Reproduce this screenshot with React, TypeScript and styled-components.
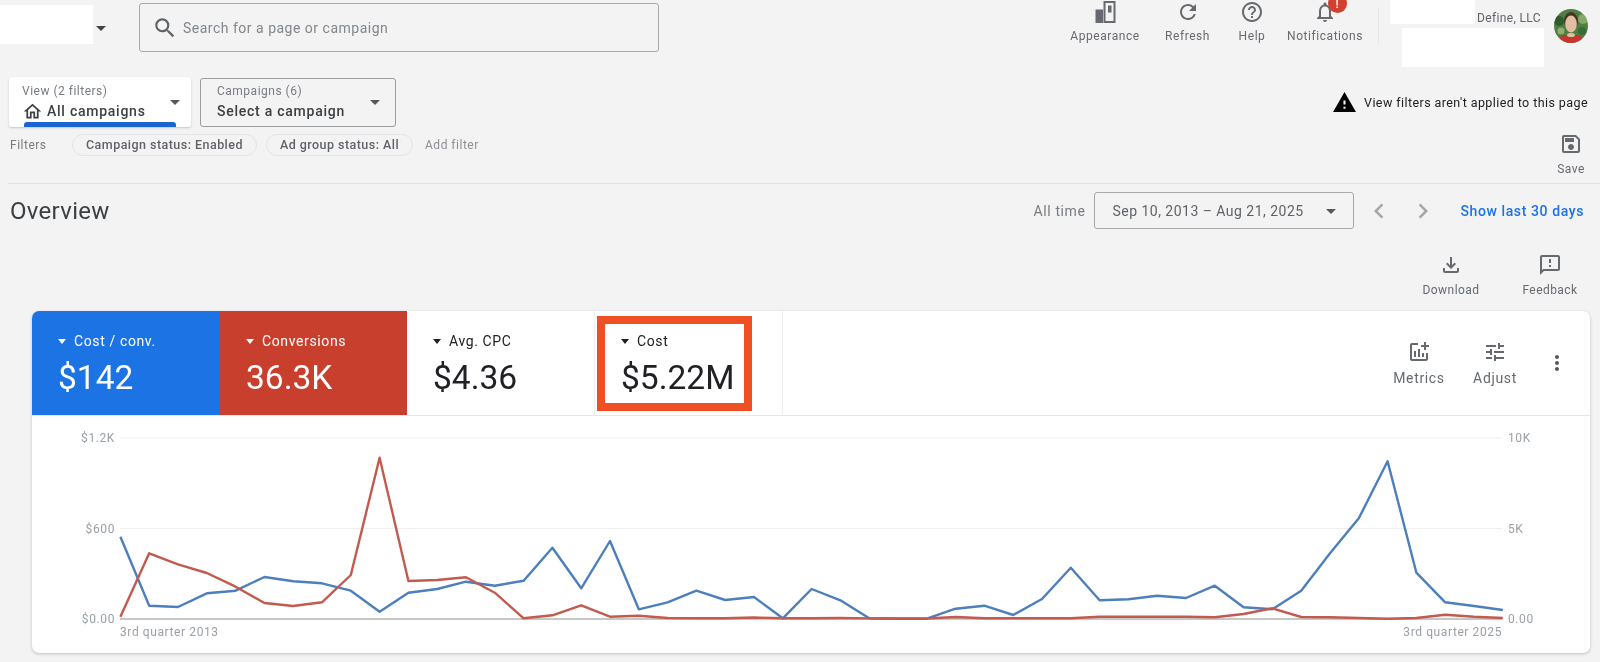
import React from 'react';
import styled, { createGlobalStyle } from 'styled-components';
import {
  MdArrowDropDown,
  MdChevronLeft,
  MdChevronRight,
  MdHelpOutline,
  MdMoreVert,
  MdOutlineAddchart,
  MdOutlineFeedback,
  MdOutlineFileDownload,
  MdOutlineHome,
  MdOutlineNotifications,
  MdOutlineSave,
  MdRefresh,
  MdSearch,
  MdTune,
  MdWarning,
} from 'react-icons/md';

const GlobalStyle = createGlobalStyle`
  html, body {
    margin: 0;
    padding: 0;
    background: #f3f3f4;
  }
  * {
    box-sizing: border-box;
  }
`;

const Page = styled.div`
  width: 1600px;
  height: 662px;
  overflow: hidden;
  background: #f3f3f4;
  color: #5f6368;
  font-family: Roboto, "Liberation Sans", sans-serif;
  filter: blur(0.35px);
`;

/* top bar */
const Header = styled.header`
  display: flex;
  height: 77px;
  padding-right: 12px;
`;

const LogoMask = styled.div`
  width: 93px;
  height: 39px;
  margin-top: 5px;
  background: #fff;
`;

const LogoCaret = styled.div`
  display: flex;
  width: 46px;
  height: 56px;
  margin-left: -4px;
  margin-right: 4px;
  align-items: center;
  color: #444;
  font-size: 24px;
`;

const SearchBox = styled.div`
  display: flex;
  width: 520px;
  height: 49px;
  margin-top: 3px;
  padding-left: 12px;
  align-items: center;
  gap: 5px;
  border: 1px solid #a6a8aa;
  border-radius: 3px;
  color: #80868b;
  font-size: 14px;
  letter-spacing: 0.5px;
  svg {
    color: #5f6368;
  }
`;

const NavList = styled.nav`
  display: flex;
  margin-left: auto;
`;

const NavItem = styled.div<{ $w: number }>`
  position: relative;
  display: flex;
  flex-direction: column;
  width: ${p => p.$w}px;
  align-items: center;
  color: #666a6e;
  font-size: 12px;
  letter-spacing: 0.55px;
  svg {
    display: block;
  }
  span {
    margin-top: 4px;
    line-height: 16px;
    white-space: nowrap;
  }
`;

const Badge = styled.i`
  position: absolute;
  top: -6px;
  left: 53px;
  width: 19px;
  height: 19px;
  padding-top: 6px;
  border-radius: 50%;
  background: #d2402e;
  color: #fff;
  font: 700 10px/10px Roboto, sans-serif;
  text-align: center;
`;

const NavDivider = styled.div`
  width: 1px;
  height: 36px;
  margin: 8px 11px 0 3px;
  background: #e3e4e6;
`;

const Account = styled.div`
  display: flex;
  width: 198px;
`;

const AccountText = styled.div`
  display: flex;
  flex-direction: column;
  width: 154px;
`;

const AccountTop = styled.div`
  display: flex;
  height: 24px;
`;

const MaskTop = styled.div`
  width: 85px;
  height: 24px;
  background: #fff;
`;

const AccountName = styled.div`
  margin: 11px 0 0 2px;
  color: #5f6368;
  font-size: 12px;
  line-height: 14px;
  letter-spacing: 0.35px;
  white-space: nowrap;
`;

const MaskBottom = styled.div`
  width: 142px;
  height: 39px;
  margin: 4px 0 0 12px;
  background: #fff;
`;

const Avatar = styled.svg`
  width: 34px;
  height: 34px;
  margin: 9px 0 0 10px;
`;

/* view and campaign pickers */
const PickerRow = styled.div`
  display: flex;
  height: 50px;
  padding: 0 12px 0 9px;
  align-items: center;
  gap: 9px;
`;

const Picker = styled.div<{ $active?: boolean }>`
  position: relative;
  display: flex;
  width: ${p => (p.$active ? 182 : 196)}px;
  height: ${p => (p.$active ? 50 : 49)}px;
  padding-left: ${p => (p.$active ? 13 : 16)}px;
  padding-right: ${p => (p.$active ? 4 : 8)}px;
  align-items: center;
  border-radius: 3px;
  background: ${p => (p.$active ? '#fff' : 'transparent')};
  border: ${p => (p.$active ? 'none' : '1px solid #9a9c9e')};
  box-shadow: ${p => (p.$active ? '0 1px 2px rgba(60, 64, 67, 0.25)' : 'none')};
  overflow: hidden;
  & > svg {
    margin-left: auto;
    color: #55585c;
  }
  &::after {
    content: ${p => (p.$active ? '""' : 'none')};
    position: absolute;
    left: 15px;
    bottom: 0;
    width: 152px;
    height: 5px;
    border-radius: 3px 3px 0 0;
    background: #1a66d0;
  }
`;

const PickerText = styled.div`
  display: flex;
  flex-direction: column;
`;

const PickerLabel = styled.div`
  color: #787c80;
  font-size: 12px;
  line-height: 16px;
  letter-spacing: 0.5px;
`;

const PickerValue = styled.div`
  display: flex;
  align-items: center;
  gap: 4px;
  margin-top: 2px;
  color: #3c4043;
  font-size: 14px;
  font-weight: 500;
  line-height: 20px;
  letter-spacing: 0.75px;
  white-space: nowrap;
`;

const Warning = styled.div`
  display: flex;
  margin-left: auto;
  align-items: center;
  gap: 7px;
  color: #202124;
  font-size: 12.5px;
  letter-spacing: 0.42px;
`;

/* filter chips */
const FilterRow = styled.div`
  display: flex;
  height: 50px;
  margin: 7px 0 0 8px;
  padding: 0 6px 0 2px;
  border-bottom: 1px solid #dfe0e2;
`;

const FilterLabel = styled.div`
  width: 62px;
  height: 22px;
  color: #777b7f;
  font-size: 12px;
  line-height: 23px;
  letter-spacing: 0.5px;
`;

const Chip = styled.div`
  height: 22px;
  margin-right: 9px;
  padding: 0 13px;
  border: 1px solid #e2e4e6;
  border-radius: 11px;
  color: #5f6368;
  font-size: 12.5px;
  font-weight: 500;
  line-height: 20px;
  letter-spacing: 0.46px;
  white-space: nowrap;
`;

const AddFilter = styled.div`
  margin-left: 3px;
  color: #8b8f93;
  font-size: 12px;
  line-height: 23px;
  letter-spacing: 0.5px;
`;

const ActionItem = styled.div<{ $w: number }>`
  display: flex;
  flex-direction: column;
  width: ${p => p.$w}px;
  align-items: center;
  color: #666a6e;
  font-size: 12px;
  letter-spacing: 0.45px;
  svg {
    display: block;
  }
  span {
    margin-top: 5px;
    line-height: 16px;
  }
`;

const SaveAction = styled(ActionItem)`
  margin-left: auto;
  margin-top: -2px;
`;

/* overview row */
const OverviewRow = styled.div`
  display: flex;
  height: 37px;
  margin-top: 8px;
  padding: 0 16px 0 10px;
  align-items: center;
`;

const Title = styled.h1`
  margin: 0;
  color: #3c4043;
  font-size: 24px;
  font-weight: 400;
  letter-spacing: 0.3px;
`;

const AllTime = styled.div`
  margin-left: auto;
  color: #787c80;
  font-size: 14px;
  letter-spacing: 0.6px;
`;

const DateBox = styled.div`
  display: flex;
  width: 260px;
  height: 37px;
  margin-left: 9px;
  padding: 0 10px 0 17px;
  align-items: center;
  justify-content: space-between;
  border: 1px solid #a6a8aa;
  border-radius: 3px;
  color: #5f6368;
  font-size: 14px;
  letter-spacing: 0.48px;
  svg {
    color: #55585c;
  }
`;

const Pager = styled.div`
  display: flex;
  margin-left: 10px;
  gap: 14px;
  color: #a3a6aa;
`;

const ShowLink = styled.a`
  margin-left: 22px;
  color: #1a73e8;
  font-size: 14px;
  font-weight: 500;
  letter-spacing: 0.6px;
`;

const ActionRow = styled.div`
  display: flex;
  height: 48px;
  margin-top: 24px;
  padding-right: 20px;
  justify-content: flex-end;
  gap: 39px;
`;

/* scorecard panel */
const Card = styled.section`
  height: 342px;
  margin: 10px 10px 0 32px;
  border-radius: 7px;
  background: #fff;
  box-shadow: 0 1px 3px rgba(60, 64, 67, 0.3);
  overflow: hidden;
`;

const TileRow = styled.div`
  display: flex;
  height: 105px;
  border-bottom: 1px solid #e6e7e9;
`;

const Tile = styled.div<{ $bg?: string; $w: number }>`
  position: relative;
  width: ${p => p.$w}px;
  padding: 21px 0 0 26px;
  background: ${p => p.$bg ?? '#fff'};
  color: ${p => (p.$bg ? '#fff' : '#202124')};
  border-right: ${p => (p.$bg ? 'none' : '1px solid #eceded')};
`;

const TileLabel = styled.div`
  display: flex;
  align-items: center;
  gap: 8px;
  font-size: 14px;
  line-height: 18px;
  letter-spacing: 0.62px;
  &::before {
    content: "";
    border-style: solid;
    border-width: 5px 4.5px 0;
    border-color: currentColor transparent transparent;
  }
`;

const TileValue = styled.div`
  margin-top: 9px;
  font-size: 33.5px;
  line-height: 38px;
`;

const Highlight = styled.div`
  position: absolute;
  top: 5px;
  left: 2px;
  width: 155px;
  height: 95px;
  border: 8px solid #f04e23;
  pointer-events: none;
`;

const Tools = styled.div`
  display: flex;
  margin-left: auto;
  padding-right: 21px;
  align-items: center;
`;

const ToolItem = styled.div`
  display: flex;
  flex-direction: column;
  width: 76px;
  align-items: center;
  color: #666a6e;
  font-size: 14px;
  letter-spacing: 0.65px;
  svg {
    display: block;
  }
  span {
    margin-top: 6px;
    line-height: 16px;
  }
`;

const MoreButton = styled.div`
  display: flex;
  margin-left: 12px;
  color: #55585c;
`;

const ChartSvg = styled.svg`
  display: block;
  width: 1558px;
  height: 236px;
`;

const AxisText = styled.text`
  fill: #9aa0a6;
  font-family: Roboto, "Liberation Sans", sans-serif;
  font-size: 12px;
  letter-spacing: 0.6px;
`;

const xs = (i: number) => 120.4 + i * 28.8;

// y of each quarter in page pixels, read off the picture
const blueLine = [
  536.7, 605.7, 607, 593.3, 590.7, 577, 581.3, 583.3, 590.7, 611.7, 592.7, 589, 581.7, 585.7, 580.7, 547.7,
  588.3, 541, 609.3, 602.3, 590.7, 600, 597, 618.3, 589, 600.3, 618.3, 618.7, 618.7, 608.7, 605.7, 615, 599,
  567.7, 600.3, 599.3, 595.7, 598, 585.7, 607.3, 609.3, 590.7, 553.3, 518.3, 461.3, 572.7, 602.3, 606, 610,
];
const redLine = [
  616.7, 553.3, 564.3, 573, 586.7, 603, 606, 602.3, 575, 457.7, 581, 580, 577.3, 592.7, 618.3, 615.3, 605.3,
  616.7, 615.7, 618, 618.3, 618.3, 617.5, 618.3, 618.2, 618, 618.4, 618.5, 618.5, 617, 618.2, 618.2, 618.2,
  618.2, 616.7, 616.7, 616.7, 616.7, 617.3, 614, 608.3, 617, 617.3, 618, 618.7, 618, 614.7, 616.7, 618,
];

const toPoints = (line: number[]) => line.map((y, i) => `${xs(i).toFixed(1)},${y}`).join(' ');

const Chart: React.FC = () => (
  <ChartSvg viewBox="32 416 1558 236">
    <line x1="120" y1="438" x2="1502" y2="438" stroke="#efefef" />
    <line x1="120" y1="528.5" x2="1502" y2="528.5" stroke="#efefef" />
    <line x1="120" y1="619" x2="1502" y2="619" stroke="#b4b4b4" strokeWidth="1.5" />
    <polyline points={toPoints(blueLine)} fill="none" stroke="#4c7fbc" strokeWidth="2.4" strokeLinejoin="round" />
    <polyline points={toPoints(redLine)} fill="none" stroke="#c25a4d" strokeWidth="2.4" strokeLinejoin="round" />
    <AxisText x="115" y="442" textAnchor="end">$1.2K</AxisText>
    <AxisText x="115" y="532.5" textAnchor="end">$600</AxisText>
    <AxisText x="115" y="623" textAnchor="end">$0.00</AxisText>
    <AxisText x="1508" y="442">10K</AxisText>
    <AxisText x="1508" y="532.5">5K</AxisText>
    <AxisText x="1508" y="623">0.00</AxisText>
    <AxisText x="120" y="636">3rd quarter 2013</AxisText>
    <AxisText x="1502" y="636" textAnchor="end">3rd quarter 2025</AxisText>
  </ChartSvg>
);

const AppearanceIcon = () => (
  <svg width="24" height="24" viewBox="0 0 24 24" fill="none">
    <rect x="11.5" y="2" width="10" height="20" stroke="#666a6e" strokeWidth="2" />
    <rect x="2.5" y="9.5" width="7.5" height="13.5" fill="#666a6e" />
    <rect x="15" y="5.5" width="3.5" height="7" fill="#666a6e" />
  </svg>
);

export default function App() {
  return (
    <Page>
      <GlobalStyle />
      <Header>
        <LogoMask />
        <LogoCaret>
          <MdArrowDropDown size={24} />
        </LogoCaret>
        <SearchBox>
          <MdSearch size={26} />
          Search for a page or campaign
        </SearchBox>
        <NavList>
          <NavItem $w={82}>
            <AppearanceIcon />
            <span>Appearance</span>
          </NavItem>
          <NavItem $w={83}>
            <MdRefresh size={24} />
            <span>Refresh</span>
          </NavItem>
          <NavItem $w={46}>
            <MdHelpOutline size={24} />
            <span>Help</span>
          </NavItem>
          <NavItem $w={100}>
            <MdOutlineNotifications size={24} />
            <Badge>!</Badge>
            <span>Notifications</span>
          </NavItem>
        </NavList>
        <NavDivider />
        <Account>
          <AccountText>
            <AccountTop>
              <MaskTop />
              <AccountName>Define, LLC</AccountName>
            </AccountTop>
            <MaskBottom />
          </AccountText>
          <Avatar viewBox="0 0 34 34">
            <defs>
              <clipPath id="avatarClip">
                <circle cx="17" cy="17" r="17" />
              </clipPath>
            </defs>
            <g clipPath="url(#avatarClip)">
              <rect width="34" height="34" fill="#4d7f45" />
              <circle cx="5" cy="12" r="5" fill="#2f5a2c" />
              <circle cx="29" cy="10" r="5" fill="#86a868" />
              <circle cx="28" cy="22" r="4" fill="#3a6a35" />
              <circle cx="7" cy="22" r="3.5" fill="#8fae72" />
              <ellipse cx="17" cy="12" rx="7" ry="9" fill="#4a3324" />
              <ellipse cx="17" cy="15" rx="5.8" ry="8.5" fill="#e4bea2" />
              <rect x="6" y="26" width="22" height="9" rx="4" fill="#c5372e" />
              <ellipse cx="17" cy="26" rx="4" ry="2" fill="#e4bea2" />
            </g>
          </Avatar>
        </Account>
      </Header>

      <PickerRow>
        <Picker $active>
          <PickerText>
            <PickerLabel>View (2 filters)</PickerLabel>
            <PickerValue>
              <MdOutlineHome size={21} />
              All campaigns
            </PickerValue>
          </PickerText>
          <MdArrowDropDown size={24} />
        </Picker>
        <Picker>
          <PickerText>
            <PickerLabel>Campaigns (6)</PickerLabel>
            <PickerValue>Select a campaign</PickerValue>
          </PickerText>
          <MdArrowDropDown size={24} />
        </Picker>
        <Warning>
          <MdWarning size={25} color="#000" />
          View filters aren't applied to this page
        </Warning>
      </PickerRow>

      <FilterRow>
        <FilterLabel>Filters</FilterLabel>
        <Chip>Campaign status: Enabled</Chip>
        <Chip>Ad group status: All</Chip>
        <AddFilter>Add filter</AddFilter>
        <SaveAction $w={46}>
          <MdOutlineSave size={24} />
          <span>Save</span>
        </SaveAction>
      </FilterRow>

      <OverviewRow>
        <Title>Overview</Title>
        <AllTime>All time</AllTime>
        <DateBox>
          Sep 10, 2013 – Aug 21, 2025
          <MdArrowDropDown size={24} />
        </DateBox>
        <Pager>
          <MdChevronLeft size={30} />
          <MdChevronRight size={30} />
        </Pager>
        <ShowLink>Show last 30 days</ShowLink>
      </OverviewRow>

      <ActionRow>
        <ActionItem $w={60}>
          <MdOutlineFileDownload size={24} />
          <span>Download</span>
        </ActionItem>
        <ActionItem $w={60}>
          <MdOutlineFeedback size={24} />
          <span>Feedback</span>
        </ActionItem>
      </ActionRow>

      <Card>
        <TileRow>
          <Tile $bg="#1c73e4" $w={188}>
            <TileLabel>Cost / conv.</TileLabel>
            <TileValue>$142</TileValue>
          </Tile>
          <Tile $bg="#c93f2d" $w={187}>
            <TileLabel>Conversions</TileLabel>
            <TileValue>36.3K</TileValue>
          </Tile>
          <Tile $w={188}>
            <TileLabel>Avg. CPC</TileLabel>
            <TileValue>$4.36</TileValue>
          </Tile>
          <Tile $w={188}>
            <TileLabel>Cost</TileLabel>
            <TileValue>$5.22M</TileValue>
            <Highlight />
          </Tile>
          <Tools>
            <ToolItem>
              <MdOutlineAddchart size={24} />
              <span>Metrics</span>
            </ToolItem>
            <ToolItem>
              <MdTune size={24} />
              <span>Adjust</span>
            </ToolItem>
            <MoreButton>
              <MdMoreVert size={24} />
            </MoreButton>
          </Tools>
        </TileRow>
        <Chart />
      </Card>
    </Page>
  );
}
